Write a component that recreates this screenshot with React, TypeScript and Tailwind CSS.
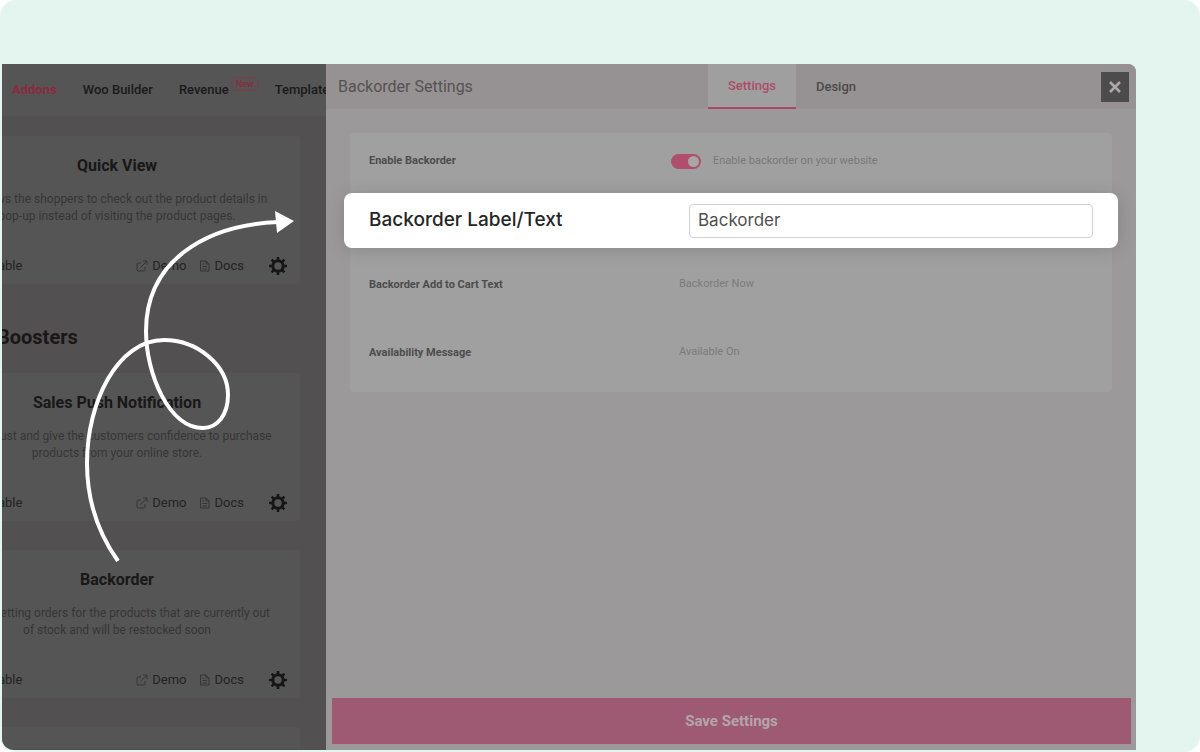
import React from "react";

type Addon = { title: string; lines: [string, string] };

const quickView: Addon = {
  title: "Quick View",
  lines: [
    "It allows the shoppers to check out the product details in",
    "pop-up instead of visiting the product pages.",
  ],
};

const boosters: Addon[] = [
  {
    title: "Sales Push Notification",
    lines: [
      "Build trust and give the customers confidence to purchase",
      "products from your online store.",
    ],
  },
  {
    title: "Backorder",
    lines: [
      "Keep getting orders for the products that are currently out",
      "of stock and will be restocked soon",
    ],
  },
];

function DemoIcon() {
  return (
    <svg viewBox="0 0 12 12" className="size-3" fill="none" stroke="#343434" strokeWidth="1">
      <path d="M5 3H2.2A1.2 1.2 0 0 0 1 4.200V9.800A1.200 1.200 0 0 0 2.200 11H7.800A1.200 1.200 0 0 0 9 9.800V7" />
      <path d="M4.500 7.500L10.800 1.200M7 1H11V5" />
    </svg>
  );
}

function DocsIcon() {
  return (
    <svg viewBox="0 0 12 12" className="size-3" fill="none" stroke="#343434" strokeWidth="1">
      <path d="M1.500 1H7L10 4V11H1.500ZM7 1V4H10M3.500 4H5M3.500 6.500H8M3.500 9H8" />
    </svg>
  );
}

function GearIcon() {
  return (
    <svg viewBox="0 0 20 20" className="size-5" fill="none" stroke="#161616">
      <circle cx="10" cy="10" r="5.200" strokeWidth="3" />
      <path
        strokeWidth="2.600"
        d="M10 4V1M10 16V19M4 10H1M16 10H19M5.800 5.800L3.600 3.600M14.200 5.800L16.400 3.600M5.800 14.200L3.600 16.400M14.200 14.200L16.400 16.400"
      />
    </svg>
  );
}

function AddonCard({ addon }: { addon: Addon }) {
  return (
    <article className="flex h-[148px] flex-col rounded bg-[#555555] pt-5 text-center">
      <h3 className="text-base leading-5 font-bold text-[#191718]">{addon.title}</h3>
      <p className="mt-[15px] text-xs leading-[17px] text-[#363636]">
        <span className="block whitespace-nowrap">{addon.lines[0]}</span>
        <span className="block whitespace-nowrap">{addon.lines[1]}</span>
      </p>
      <div className="mt-auto flex items-center gap-3 pr-3 pb-2 text-[13px] text-[#232323]">
        <span className="mr-auto pl-16">able</span>
        <a href="#demo" className="flex items-center gap-1">
          <DemoIcon />
          Demo
        </a>
        <a href="#docs" className="flex items-center gap-1">
          <DocsIcon />
          Docs
        </a>
        <button aria-label={addon.title + " settings"} className="ml-3">
          <GearIcon />
        </button>
      </div>
    </article>
  );
}

function AddonsPane() {
  return (
    <section className="w-[324px] shrink-0 overflow-hidden bg-[#535051]">
      <nav className="flex h-[52px] items-center gap-[26px] bg-[#555555] pl-[10px] text-[13px] font-medium whitespace-nowrap text-[#1a1a1a]">
        <a href="#addons" className="font-bold text-[#8b2941]">Addons</a>
        <a href="#builder">Woo Builder</a>
        <a href="#revenue" className="relative mr-5">
          Revenue
          <span className="absolute -top-[3px] left-[52px] flex h-3.5 items-center rounded-full border border-[#85394c] px-1 text-[9px] text-[#8b2941]">
            New
          </span>
        </a>
        <a href="#templates">Templates</a>
      </nav>
      <div className="-ml-[68px] w-[366px] pt-5">
        <AddonCard addon={quickView} />
        <h2 className="pt-[41px] pb-6 pl-[63px] text-xl leading-6 font-bold text-[#191718]">Boosters</h2>
        <div className="flex flex-col gap-[29px]">
          {boosters.map((addon) => (
            <AddonCard key={addon.title} addon={addon} />
          ))}
          <div className="h-[21px] rounded-t bg-[#555555]" />
        </div>
      </div>
    </section>
  );
}

function SettingsPanel() {
  return (
    <section className="flex flex-1 flex-col bg-[#9c999a]">
      <header className="flex h-[45px] items-center bg-[#969293] pr-[7px] pl-3">
        <h1 className="w-[370px] text-base text-[#555152]">Backorder Settings</h1>
        <nav className="flex h-full flex-1 items-stretch text-[13px] font-medium">
          <a href="#settings" className="flex w-[88px] items-center justify-center border-b-2 border-[#a94864] bg-[#9f9f9f] text-[#ad4c68]">
            Settings
          </a>
          <a href="#design" className="flex w-20 items-center justify-center text-[#4b494a]">
            Design
          </a>
        </nav>
        <button aria-label="Close" className="flex h-[30px] w-7 items-center justify-center bg-[#4d4c4c]">
          <svg viewBox="0 0 12 12" className="size-3" stroke="#aaa8a8" strokeWidth="2.600">
            <path d="M1 1L11 11M11 1L1 11" />
          </svg>
        </button>
      </header>

      <form className="flex flex-1 flex-col text-[11px]">
        <div className="mx-6 mt-6 rounded bg-[#a0a0a0] pb-2 text-[#4c4c4c]">
          <div className="flex h-[60px] items-center pb-1 pl-[19px]">
            <label htmlFor="enable" className="w-[302px] font-bold">Enable Backorder</label>
            <input
              id="enable"
              type="checkbox"
              defaultChecked
              className="h-[15px] w-[30px] appearance-none rounded-full bg-[#af4f6b] after:mt-0.5 after:mr-0.5 after:ml-auto after:block after:size-[11px] after:rounded-full after:bg-[#aaa5a7]"
            />
            <span className="ml-3 text-[#797879]">Enable backorder on your website</span>
          </div>
          <div className="-mx-1.5 flex h-[55px] items-center rounded-lg bg-white px-[25px] font-[Inter] shadow-[0_2px_18px_rgba(0,0,0,0.15)]">
            <label htmlFor="label" className="w-80 text-[19px] font-medium text-[#252525]">Backorder Label/Text</label>
            <input
              id="label"
              defaultValue="Backorder"
              className="h-[34px] min-w-0 flex-1 rounded border border-[#d2d2d2] px-2 pb-0.5 text-[17px] text-[#505050]"
            />
          </div>
          <div className="flex h-[72px] items-center pl-[19px]">
            <label htmlFor="cart" className="w-[310px] pt-0.5 font-bold">Backorder Add to Cart Text</label>
            <input id="cart" defaultValue="Backorder Now" className="bg-transparent text-[#7c7b7c]" />
          </div>
          <div className="flex h-16 items-center pl-[19px]">
            <label htmlFor="message" className="w-[310px] pt-0.5 font-bold">Availability Message</label>
            <input id="message" defaultValue="Available On" className="bg-transparent text-[#7c7b7c]" />
          </div>
        </div>
        <button
          type="button"
          className="mt-auto mr-[5px] mb-1.5 ml-1.5 h-[46px] bg-[#9e5a72] text-[15px] font-bold text-[#b4a5aa]"
        >
          Save Settings
        </button>
      </form>
    </section>
  );
}

export default function App() {
  return (
    <main className="relative flex min-h-screen rounded-2xl bg-[#e4f4ef] pt-16 pr-16 pb-0.5 pl-0.5 font-[Roboto,sans-serif]">
      <div className="flex flex-1 overflow-hidden rounded-tr-lg rounded-bl-xl">
        <AddonsPane />
        <SettingsPanel />
      </div>
      <svg
        aria-hidden="true"
        viewBox="0 0 300 570"
        className="pointer-events-none absolute top-0 left-0 h-[570px] w-[300px]"
        fill="none"
      >
        <path
          d="M118 561C98 533 87 499 87 463C87 403 117 340 164 340C197 340 228 365 228 395C228 414 218 428 203 428C169 428 146 374 146 331C146 262 204 225 278 222"
          stroke="white"
          strokeWidth="4"
        />
        <path d="M275 211L294 221L277 233Z" fill="white" />
      </svg>
    </main>
  );
}
